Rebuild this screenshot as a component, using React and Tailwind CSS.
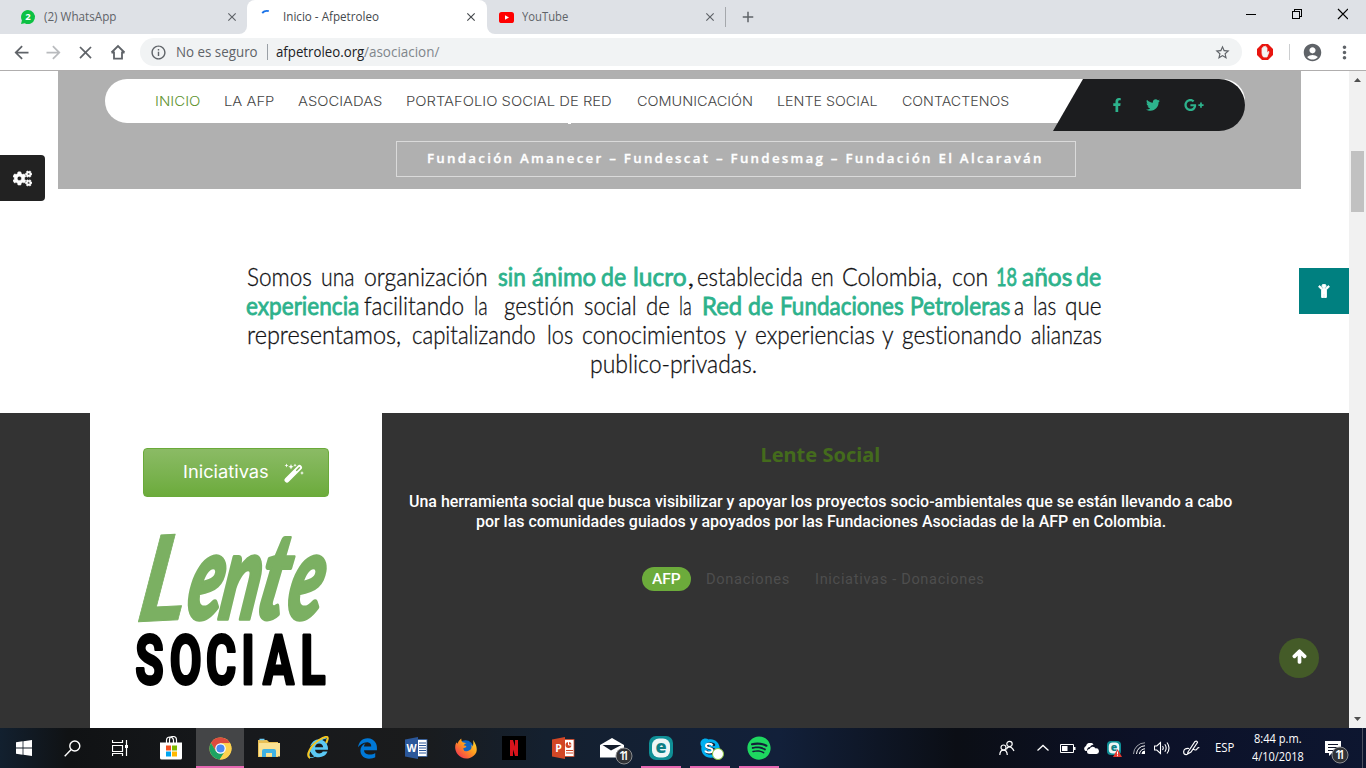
import { useLayoutEffect, useRef } from "react";
import {
  MdArrowBack, MdArrowForward, MdClose, MdInfoOutline,
  MdStarBorder, MdAccountCircle, MdMoreVert, MdAdd,
} from "react-icons/md";
import {
  FaFacebookF, FaTwitter, FaGooglePlusG, FaCogs, FaChild, FaArrowUp,
  FaSpotify, FaEdgeLegacy, FaInternetExplorer, FaSkype,
} from "react-icons/fa";

const UI = "font-['Open_Sans',sans-serif]";

/* Single-line text set to a fixed measure, condensed or widened as needed. */
function Fit({ w, className = "", children }) {
  const inner = useRef(null);
  useLayoutEffect(() => {
    const apply = () => {
      const natural = inner.current?.offsetWidth;
      if (natural) inner.current.style.transform = `scaleX(${w / natural})`;
    };
    apply();
    document.fonts?.ready.then(apply);
  }, [w]);
  return (
    <span className={`block shrink-0 whitespace-nowrap text-left ${className}`} style={{ width: w }}>
      <span ref={inner} className="inline-block origin-left">{children}</span>
    </span>
  );
}

function TabStrip() {
  return (
    <div className={`flex h-[34px] bg-white text-[12px] leading-[34px] text-[#5f6368] ${UI}`}>
      <div className="flex w-[247px] items-center rounded-br-lg bg-[#dee1e6] pl-5">
        <svg className="h-4 w-4 overflow-visible" viewBox="0 0 16 16">
          <path d="M8 1a7 7 0 1 1-3.3 13.2L1 15l.9-3.6A7 7 0 0 1 8 1z" fill="#0dc143" />
          <text x="8" y="11.4" textAnchor="middle" fontSize="9.5" fontWeight="700" fill="#fff" fontFamily="Open Sans">2</text>
        </svg>
        <Fit w={72} className="ml-2">(2) WhatsApp</Fit>
        <MdClose className="ml-[109px]" size={14} />
      </div>
      <div className="w-[240px] bg-[linear-gradient(#dee1e6_50%,#fff_50%)]">
        <div className="flex h-full items-center rounded-t-lg bg-white pl-[14px] text-[#45494d]">
          <svg className="h-4 w-4" viewBox="0 0 16 16">
            <path d="M1.200 4Q4 1 7.800 2.200" fill="none" stroke="#1a73e8" strokeWidth="1.900" />
          </svg>
          <Fit w={96} className="ml-[6px]">Inicio - Afpetroleo</Fit>
          <MdClose className="ml-[85px]" size={14} />
        </div>
      </div>
      <div className="flex flex-1 items-center rounded-bl-lg bg-[#dee1e6] pl-3">
        <svg className="h-[11px] w-[15px]" viewBox="0 0 15 11">
          <rect width="15" height="11" rx="2.6" fill="#f00" />
          <path d="M6 3.2v4.6l4-2.3z" fill="#fff" />
        </svg>
        <Fit w={46} className="ml-2">YouTube</Fit>
        <MdClose className="ml-[135px]" size={14} />
        <div className="ml-2 h-5 w-px bg-[#a5a8ac]" />
        <MdAdd className="ml-[13px]" size={18} />
        <svg className="ml-auto mr-[18px] mt-2 h-3 w-[102px] self-start" viewBox="0 0 102 12" fill="none" stroke="#000" shapeRendering="crispEdges">
          <path d="M0 6.500h10" />
          <path d="M46.500 3.500h7v7h-7zM48.500 3v-1.500h7v7h-2" />
          <path d="M92 1l10 10M102 1L92 11" shapeRendering="auto" strokeWidth="1.2" />
        </svg>
      </div>
    </div>
  );
}

function Toolbar() {
  return (
    <div className={`flex h-9 items-center bg-white pl-[11px] text-[14px] leading-7 text-[#5f6368] ${UI}`}>
      <MdArrowBack size={21} />
      <MdArrowForward className="ml-[11px] text-[#b9bbbe]" size={21} />
      <MdClose className="ml-[11px]" size={21} />
      <svg className="ml-[14px] mr-[2px] h-4 w-4" viewBox="0 0 16 16" fill="none" stroke="currentColor" strokeWidth="1.800">
        <path d="M1.500 8.500L8 2l6.500 6.500M1.500 8.500H4V14.600h8V8.500h2.500" />
      </svg>
      <div className="ml-3 flex h-7 w-[1102px] items-center rounded-full bg-[#f1f3f4] pl-[10px]">
        <MdInfoOutline size={17} />
        <Fit w={82} className="ml-[9px] text-[14px]">No es seguro</Fit>
        <div className="ml-[9px] h-4 w-px bg-[#9aa0a6]" />
        <Fit w={88} className="ml-2 text-[14px] text-[#202124]">afpetroleo.org</Fit>
        <Fit w={75} className="text-[14px] text-[#80868b]">/asociacion/</Fit>
        <MdStarBorder className="ml-auto mr-[11px]" size={17} />
      </div>
      <svg className="ml-[15px] h-4 w-4" viewBox="0 0 16 16">
        <path d="M5 0h6l5 5v6l-5 5H5l-5-5V5z" fill="#e8150f" />
        <path d="M5 9V4.200q.7-.8 1.200 0V3q.7-.9 1.300 0v-.5q.7-.7 1.300 0V3.500q.8-.6 1.200.2V9l1.300-1.600q.9 0 .6.800L10 13H6.500Q5 11.500 5 9z" fill="#f3f3f3" stroke="#f3f3f3" strokeWidth=".8" />
      </svg>
      <div className="ml-4 h-4 w-px bg-[#ccced0]" />
      <MdAccountCircle className="ml-3" size={21} />
      <MdMoreVert className="ml-[11px]" size={21} />
    </div>
  );
}

const NAV = [
  ["INICIO", 45], ["LA AFP", 50], ["ASOCIADAS", 84], ["PORTAFOLIO SOCIAL DE RED", 206],
  ["COMUNICACIÓN", 116], ["LENTE SOCIAL", 101], ["CONTACTENOS", 107],
];

function Hero() {
  return (
    <header className="ml-[58px] h-[118px] w-[1243px] bg-[#b0b0b0] pl-[47px] pt-2">
      <nav className="relative flex h-11 w-[1140px] items-center gap-[24.300px] rounded-full bg-white pl-[49.500px] pt-[2px] font-['Inter',sans-serif] text-[13px] font-light text-[#444]">
        {NAV.map(([label, w], i) => (
          <Fit key={label} w={w} className={i === 0 ? "text-[#5f9430]" : ""}>{label}</Fit>
        ))}
        <div className="absolute right-0 top-0 flex h-[52px] w-[192px] items-center rounded-r-[28px] bg-[#1c1d1f] pl-[57px] text-[#2db28c] [clip-path:polygon(30px_0,100%_0,100%_100%,0_100%)]">
          <FaFacebookF size={14} />
          <FaTwitter className="ml-[22px]" size={14} />
          <FaGooglePlusG className="ml-[24px]" size={20} />
        </div>
        <div className="absolute left-[463px] top-11 h-px w-[3px] bg-white" />
      </nav>
      <div className="ml-[291px] mt-[18px] flex h-9 w-[680px] items-center border border-[#dadada] pl-[29.500px] font-['Open_Sans',sans-serif] text-[13px] font-semibold tracking-[2.200px] text-white [-webkit-text-stroke:0.300px_#fff]">
        <Fit w={617}>Fundación Amanecer – Fundescat – Fundesmag – Fundación El Alcaraván</Fit>
      </div>
    </header>
  );
}

/* [word, left, right, emphasised] */
const ABOUT = [
  [["Somos", 247, 312], ["una", 321, 355], ["organización", 364, 488], ["sin", 498, 526, 1], ["ánimo", 532, 596, 1], ["de", 601, 626, 1], ["lucro", 633, 687, 1], [",", 687, 694], ["establecida", 697, 803], ["en", 811, 834], ["Colombia,", 842, 942], ["con", 952, 988], ["18", 996, 1017, 1], ["años", 1022, 1072, 1], ["de", 1076, 1101, 1]],
  [["experiencia", 246, 359, 1], ["facilitando", 364, 464], ["la", 474, 488], ["gestión", 504, 574], ["social", 584, 637], ["de", 646, 670], ["la", 679, 692], ["Red", 702, 742, 1], ["de", 748, 773, 1], ["Fundaciones", 780, 904, 1], ["Petroleras", 910, 1010, 1], ["a", 1014, 1024], ["las", 1033, 1056], ["que", 1065, 1102]],
  [["representamos,", 247, 401], ["capitalizando", 412, 536], ["los", 547, 573], ["conocimientos", 582, 726], ["y", 735, 747], ["experiencias", 755, 875], ["y", 882, 894], ["gestionando", 902, 1022], ["alianzas", 1031, 1102]],
  [["publico-privadas.", 590, 757]],
];

function About() {
  return (
    <section className="h-[224px] pt-[73px] font-['Lato',sans-serif] text-[25px] leading-[29px] text-[#111113] [font-variant-ligatures:none]">
      {ABOUT.map((line, r) => (
        <p key={r} className="flex font-light">
          {line.map(([word, left, right, em], i) => (
            <span key={i} style={{ marginLeft: left - (i ? line[i - 1][2] : 0) }}>
              <Fit w={right - left} className={em ? "font-normal text-[#2db28c] [-webkit-text-stroke:0.800px_#2db28c]" : "[-webkit-text-stroke:0.300px_#111113]"}>{word}</Fit>
            </span>
          ))}
        </p>
      ))}
    </section>
  );
}

function LenteLogo() {
  return (
    <svg className="ml-[44px] mt-[35px] h-[160px] w-[196px] overflow-visible" viewBox="0 0 196 160">
      <g fill="#7bb062" stroke="#7bb062" strokeLinejoin="round" strokeLinecap="round" fontFamily="Lato" fontWeight="900" fontStyle="italic" fontSize="118">
        <text transform="translate(1 90) rotate(-3) skewX(-12) scale(.84 1)" strokeWidth="1">L</text>
        <g transform="translate(50 87) skewX(-10) scale(.6 1.020)" strokeWidth="3.500">
          <text x="0 55" y="0">en</text>
          <text x="167" y="0">e</text>
        </g>
        <text transform="translate(119 87) skewX(-12) scale(.66 1.030)" strokeWidth="3">t</text>
      </g>
      <text transform="translate(.5 152) scale(.68 1)" x="1 52 105 157 189 244" y="0" fontFamily="Roboto" fontWeight="700" fontSize="68" fill="#000" stroke="#000" strokeWidth="3" strokeLinejoin="round">SOCIAL</text>
    </svg>
  );
}

function LenteSection() {
  return (
    <section className="flex h-[315px] bg-[#333] pl-[90px]">
      <div className="w-[292px] bg-white pt-[35px]">
        <button className="ml-[53px] flex h-[49px] w-[186px] items-center rounded border border-[#6aaa3a] bg-linear-to-b from-[#8bbb65] to-[#6cab3b] pl-[39px] font-['Inter',sans-serif] text-[17px] text-white">
          <Fit w={86}>Iniciativas</Fit>
          <svg className="ml-[15px] h-5 w-5" viewBox="0 0 20 20">
            <path d="M3 17L15.500 4.500" stroke="#fff" strokeWidth="5" strokeLinecap="round" />
            <path d="M12.300 7.700L15.800 4.200" stroke="#79b04c" strokeWidth="1.300" />
            <path d="M2.500.500l.6 1.400 1.400.6-1.400.6-.6 1.400-.6-1.400L.500 2.500l1.400-.6zM7 1l.8 1.900 1.900.8-1.900.8L7 6.400l-.8-1.900-1.900-.8 1.900-.8zM11 .500l.5 1.200 1.200.5-1.200.5-.5 1.200-.5-1.200-1.200-.5 1.200-.5zM18 8l.6 1.400 1.400.6-1.400.6L18 12l-.6-1.400L16 10l1.400-.6z" fill="#fff" />
          </svg>
        </button>
        <LenteLogo />
      </div>
      <div className="flex w-[877px] flex-col items-center pt-[28px] font-['Roboto',sans-serif] text-white">
        <h2 className="font-['Noto_Sans',sans-serif] text-[20px] font-bold leading-7 text-[#446b1c]"><Fit w={120}>Lente Social</Fit></h2>
        <div className="mt-[23px] flex flex-col items-center text-[16px] font-medium leading-5">
          <Fit w={823}>Una herramienta social que busca visibilizar y apoyar los proyectos socio-ambientales que se están llevando a cabo</Fit>
          <Fit w={690}>por las comunidades guiados y apoyados por las Fundaciones Asociadas de la AFP en Colombia.</Fit>
        </div>
        <div className="ml-[260px] mt-[35px] flex w-[357px] items-center self-start text-[15px] leading-6 text-[#4e4e4e]">
          <div className="rounded-full bg-[#6cab3b] px-[10px] font-medium text-white"><Fit w={29}>AFP</Fit></div>
          <Fit w={84} className="ml-[15px] tracking-[.7px]">Donaciones</Fit>
          <Fit w={170} className="ml-[25px] tracking-[.7px]">Iniciativas - Donaciones</Fit>
        </div>
      </div>
    </section>
  );
}

function Scrollbar() {
  return (
    <div className="flex w-[17px] flex-col items-center bg-[#f1f1f1]">
      <svg className="h-[17px] w-[17px]" viewBox="0 0 17 17"><path d="M5 11l3.500-4 3.500 4z" fill="#505050" /></svg>
      <div className="mt-[63px] h-[61px] w-[13px] bg-[#c1c1c1]" />
      <svg className="mt-auto h-[17px] w-[17px]" viewBox="0 0 17 17"><path d="M5 6l3.500 4L12 6z" fill="#505050" /></svg>
    </div>
  );
}

function Eset({ s }) {
  return (
    <svg className="overflow-visible" width={s} height={s} viewBox="0 0 24 24">
      <rect width="24" height="24" rx="7" fill="#0f8f96" />
      <rect x="3" y="2.500" width="18" height="19" rx="7" fill="#eef6f6" />
      <text x="12" y="17.300" textAnchor="middle" fontFamily="Open Sans" fontWeight="800" fontSize="18" fill="#0f7f86">e</text>
    </svg>
  );
}

function Office({ color, letter, children }) {
  return (
    <svg className="overflow-visible" width="24" height="24" viewBox="0 0 24 24">
      <rect x="11" y="3.500" width="12" height="17" fill="#fff" stroke={color} strokeWidth=".8" />
      {children}
      <path d="M1 3.500L14 1v22L1 20.500z" fill={color} />
      <text x="7.500" y="16" textAnchor="middle" fontFamily="Open Sans" fontWeight="700" fontSize="10.500" fill="#fff">{letter}</text>
    </svg>
  );
}

function Badge() {
  return (
    <svg className="h-[18px] w-[18px] overflow-visible" viewBox="0 0 18 18">
      <circle cx="9" cy="9" r="8" fill="#303236" stroke="#8b8d90" />
      <text x="9" y="13.300" textAnchor="middle" fontFamily="Open Sans" fontWeight="600" fontSize="12" fill="#fff" textLength="10">11</text>
    </svg>
  );
}

function Cell({ open, active, children }) {
  return (
    <div className={`mr-px flex h-10 w-12 flex-col items-center ${active ? "bg-[#444547]" : ""}`}>
      <div className="flex h-[38px] items-center pt-[2px]">{children}</div>
      {(open || active) && <div className={`h-[2px] bg-[#e667b2] ${active ? "w-12" : "w-10"}`} />}
    </div>
  );
}

function Taskbar() {
  return (
    <footer className={`flex h-10 items-center bg-[linear-gradient(90deg,#12202f_0,#101214_5%,#17191c_18%,#1a1b1c_30%,#14202f_40%,#12203a_57%,#0b0e15_70%,#0c1128_84%,#0d1630_100%)] text-white ${UI}`}>
      <svg className="ml-4 h-4 w-4" viewBox="0 0 16 16" fill="#fff">
        <path d="M0 2.200L6.600 1.300v6.300H0zM7.400 1.200L16 0v7.600H7.400zM0 8.400h6.600v6.300L0 13.800zM7.400 8.400H16V16l-8.600-1.200z" />
      </svg>
      <svg className="ml-8 h-[17px] w-[17px]" viewBox="0 0 17 17" fill="none" stroke="#fff" strokeWidth="1.400">
        <circle cx="10.800" cy="6" r="5" /><path d="M7.200 9.600L.7 16.200" />
      </svg>
      <svg className="ml-[31px] h-4 w-4" viewBox="0 0 16 16" fill="none" stroke="#fff">
        <path d="M.5 0v2.500h10V0M.5 5.500h10v6h-10zM.5 16v-2.500h10V16M14.500 0v16" strokeWidth="1.200" /><path d="M13 6.500h3" strokeWidth="3" />
      </svg>
      <div className="ml-[19px] flex">
        <Cell>
          <svg width="24" height="24" viewBox="0 0 24 24">
            <path d="M7.500 7V4.500a3.500 3.500 0 0 1 7 0V7M10.500 7V4a3.500 3.500 0 0 1 7 0v3" fill="none" stroke="#fff" strokeWidth="1.200" />
            <path d="M1 6.500h22V22q0 1.500-1.500 1.500h-19Q1 23.500 1 22z" fill="#fff" />
            <path d="M7 9.500h5v5H7z" fill="#f25022" /><path d="M13 9.500h5v5h-5z" fill="#7fba00" />
            <path d="M7 15.500h5v5H7z" fill="#00a4ef" /><path d="M13 15.500h5v5h-5z" fill="#ffb900" />
          </svg>
        </Cell>
        <Cell active>
          <svg width="23" height="23" viewBox="0 0 48 48">
            <circle cx="24" cy="24" r="23" fill="#fdd24f" />
            <path d="M24 13H44a23 23 0 0 0-39.900-.5L14.500 30z" fill="#dd4b3e" />
            <path d="M4.100 12.500A23 23 0 0 0 22.500 47L33.500 29.500 14.500 29.500z" fill="#1da362" />
            <path d="M24 13H44a23 23 0 0 1-21.500 34L33.500 29.500z" fill="#fdd24f" />
            <circle cx="24" cy="24" r="11" fill="#fff" /><circle cx="24" cy="24" r="8.500" fill="#4a89f3" />
          </svg>
        </Cell>
        <Cell>
          <svg width="22" height="20" viewBox="0 0 22 20">
            <path d="M0 2h9l2 2h9v15H0z" fill="#e9bf55" /><path d="M1 5h21v13.500H1z" fill="#fbe293" />
            <path d="M4 19v-6q0-2 2-2h10q2 0 2 2v6h-4v-4H8v4z" fill="#3fb2e3" />
            <path d="M1.500 1.500h5" stroke="#6dcff6" strokeWidth="1.500" />
          </svg>
        </Cell>
        <Cell>
          <span className="relative">
            <FaInternetExplorer size={20} className="text-[#5bc9f5]" />
            <svg className="absolute -left-[2px] -top-[2px] h-6 w-6" viewBox="0 0 24 24" fill="none">
              <path d="M4 22C-1 20 5 9 13 4s11-4 7 3" stroke="#f4c622" strokeWidth="2" />
            </svg>
          </span>
        </Cell>
        <Cell><FaEdgeLegacy size={21} className="text-[#0078d7]" /></Cell>
        <Cell>
          <Office color="#2b579a" letter="W"><path d="M15 7h7M15 9.500h7M15 12h7M15 14.500h7M15 17h7" stroke="#2b579a" strokeWidth="1.100" /></Office>
        </Cell>
        <Cell>
          <svg width="23" height="23" viewBox="0 0 24 24">
            <defs><linearGradient id="fx" x1="1" y1="0" x2="0" y2="1"><stop offset="0" stopColor="#ffe635" /><stop offset=".45" stopColor="#ff9a1f" /><stop offset="1" stopColor="#f01f5c" /></linearGradient></defs>
            <circle cx="12" cy="12" r="8.500" fill="#1265c4" />
            <path d="M20 3q5 7 3.300 13A11.600 11.600 0 1 1 2.500 5.500q.5 1 1 1.500Q5.500 3 7.500 1.500q0 3 1.500 4 2 .3 4 1-2 0-3 2.500 3-.5 3 1.500L9.500 12q1 4 5 2.500 5-1 3.500-6.500 1 .5 1.700 2Q20.500 6 20 3z" fill="url(#fx)" />
          </svg>
        </Cell>
        <Cell>
          <svg width="24" height="24" viewBox="0 0 24 24"><path d="M0 0h24v24H0z" fill="#000" /><path d="M8 4h3l2 6.500V4h3v16h-3l-2-6.500V20H8z" fill="#d8141c" /></svg>
        </Cell>
        <Cell>
          <Office color="#d24726" letter="P"><circle cx="17.500" cy="9" r="3" fill="#d24726" /><path d="M17.500 5v4h4" stroke="#fff" fill="none" /><path d="M15 14.500h7M15 17h7" stroke="#d24726" strokeWidth="1.200" /></Office>
        </Cell>
        <Cell>
          <span className="relative">
            <svg width="24" height="20" viewBox="0 0 24 20">
              <path d="M0 7L12 0l12 7v12.500H0z" fill="#fff" /><path d="M2.500 7h19L11 12.500z" fill="#131c2b" />
            </svg>
            <span className="absolute -bottom-[7px] -right-[9px]"><Badge /></span>
          </span>
        </Cell>
        <Cell open><Eset s={24} /></Cell>
        <Cell open>
          <span className="relative">
            <FaSkype size={23} className="text-[#00aff0]" />
            <svg className="absolute left-1 top-[5px] h-3 w-3" viewBox="0 0 12 12"><path d="M9.500 3.500C8.500 1.200 3 1.200 3 4s6.500 1.200 6.500 4.200S3 11 2.300 8.500" fill="none" stroke="#fff" strokeWidth="2" /></svg>
            <span className="absolute -right-[2px] bottom-0 h-3 w-3 rounded-full border border-[#8cc63f] bg-white" />
          </span>
        </Cell>
        <Cell open><FaSpotify size={24} className="text-[#1ed760]" /></Cell>
      </div>

      <svg className="ml-[215px] h-4 w-4" viewBox="0 0 16 16" fill="none" stroke="#fff" strokeWidth="1.200">
        <circle cx="10.500" cy="4" r="2.700" /><path d="M7.500 9.500q.5-2.700 3-2.700T15 11" />
        <circle cx="4.500" cy="7.500" r="2.500" /><path d="M.8 15q.2-4.800 3.700-4.800T8.300 15" />
      </svg>
      <svg className="ml-[22px] h-2 w-3" viewBox="0 0 12 8" fill="none" stroke="#fff" strokeWidth="1.300"><path d="M.5 6.500l5.500-5 5.500 5" /></svg>
      <svg className="ml-[11px] h-[9px] w-4" viewBox="0 0 16 9"><path d="M.5.5h13v8H.5z" fill="none" stroke="#fff" /><path d="M2 2h5.500v5H2zM14 3h1.500v3H14z" fill="#fff" /></svg>
      <svg className="ml-[7px] h-[11px] w-4" viewBox="0 0 16 11" fill="#fff">
        <path d="M2.500 8A2.800 2.800 0 0 1 3 3 4.200 4.200 0 0 1 10.500 1.500Q7.500 2 7 4 4.200 4 3.800 8z" />
        <path d="M6.500 11a2.400 2.400 0 0 1 0-5 3.400 3.400 0 0 1 6.200-.6A2.800 2.800 0 0 1 13.500 11z" />
      </svg>
      <span className="relative ml-2">
        <Eset s={14} />
        <svg className="absolute -bottom-[2px] left-[6px] h-2 w-[9px]" viewBox="0 0 9 8"><path d="M4.500 0L9 8H0z" fill="#e5392f" /><path d="M4.500 2.500v3M4.500 6.200v1" stroke="#fff" /></svg>
      </span>
      <svg className="ml-3 h-3 w-3" viewBox="0 0 12 12" fill="none" stroke="#fff">
        <path d="M.5 12A11.500 11.500 0 0 1 12 .8" opacity=".6" /><path d="M3.500 12A8.500 8.500 0 0 1 12 3.800M6.500 12A5.500 5.500 0 0 1 12 6.800" /><path d="M9 12a3 3 0 0 1 3-3v3z" fill="#fff" />
      </svg>
      <svg className="ml-[9px] h-[14px] w-[17px]" viewBox="0 0 17 14" fill="none" stroke="#fff" strokeWidth="1.100">
        <path d="M.5 5h2.300L6.500 1.500v11L2.800 9H.5zM8.500 5q1.500 2 0 4M10.800 3.300q2.700 3.700 0 7.400M13 1.500q4 5.500 0 11" />
      </svg>
      <svg className="ml-[12px] h-4 w-[17px]" viewBox="0 0 17 16" fill="none" stroke="#fff" strokeWidth="1.200">
        <path d="M5 12L12 1.500q2-1 2.500 1L8 12l-3.500 2zM6 8.500Q1 8 .7 11.500T4 14.500M10 9q3 2 4 0t2.300-1" />
      </svg>
      <Fit w={19} className="ml-[15px] text-[12px]">ESP</Fit>
      <div className="ml-[18px] flex w-[52px] flex-col items-center text-[12px] leading-[18px]">
        <Fit w={48}>8:44 p.m.</Fit>
        <Fit w={52}>4/10/2018</Fit>
      </div>
      <span className="relative ml-[21px]">
        <svg width="17" height="15" viewBox="0 0 17 15"><path d="M0 0h16v12H7l-3 3v-3H0z" fill="#fff" /><path d="M3 3.500h10M3 6.500h10M3 9.500h7" stroke="#10152a" /></svg>
        <span className="absolute -bottom-2 -right-[7px]"><Badge /></span>
      </span>
      <div className="ml-5 h-10 w-px bg-[#4c5160]" />
    </footer>
  );
}

export default function App() {
  return (
    <div className="flex h-[768px] w-[1366px] flex-col overflow-hidden bg-white">
      <TabStrip />
      <Toolbar />
      <div className="h-px bg-[#b0aeae]" />
      <div className="flex h-[657px]">
        <main className="relative w-[1349px]">
          <Hero />
          <About />
          <LenteSection />
          <div className="absolute left-0 top-[84px] flex h-[46px] w-[45px] items-center rounded-r bg-[#222] pl-[13px] text-white"><FaCogs size={19} stroke="currentColor" strokeWidth={18} /></div>
          <div className="absolute right-0 top-[197px] flex h-[46px] w-[50px] items-center justify-center bg-[#008080] text-white"><FaChild size={14} stroke="currentColor" strokeWidth={34} /></div>
          <div className="absolute right-[30px] top-[567px] flex h-10 w-10 items-center justify-center rounded-full bg-[#445b28] pb-[3px] text-white"><FaArrowUp size={15} stroke="currentColor" strokeWidth={46} /></div>
        </main>
        <Scrollbar />
      </div>
      <Taskbar />
    </div>
  );
}
